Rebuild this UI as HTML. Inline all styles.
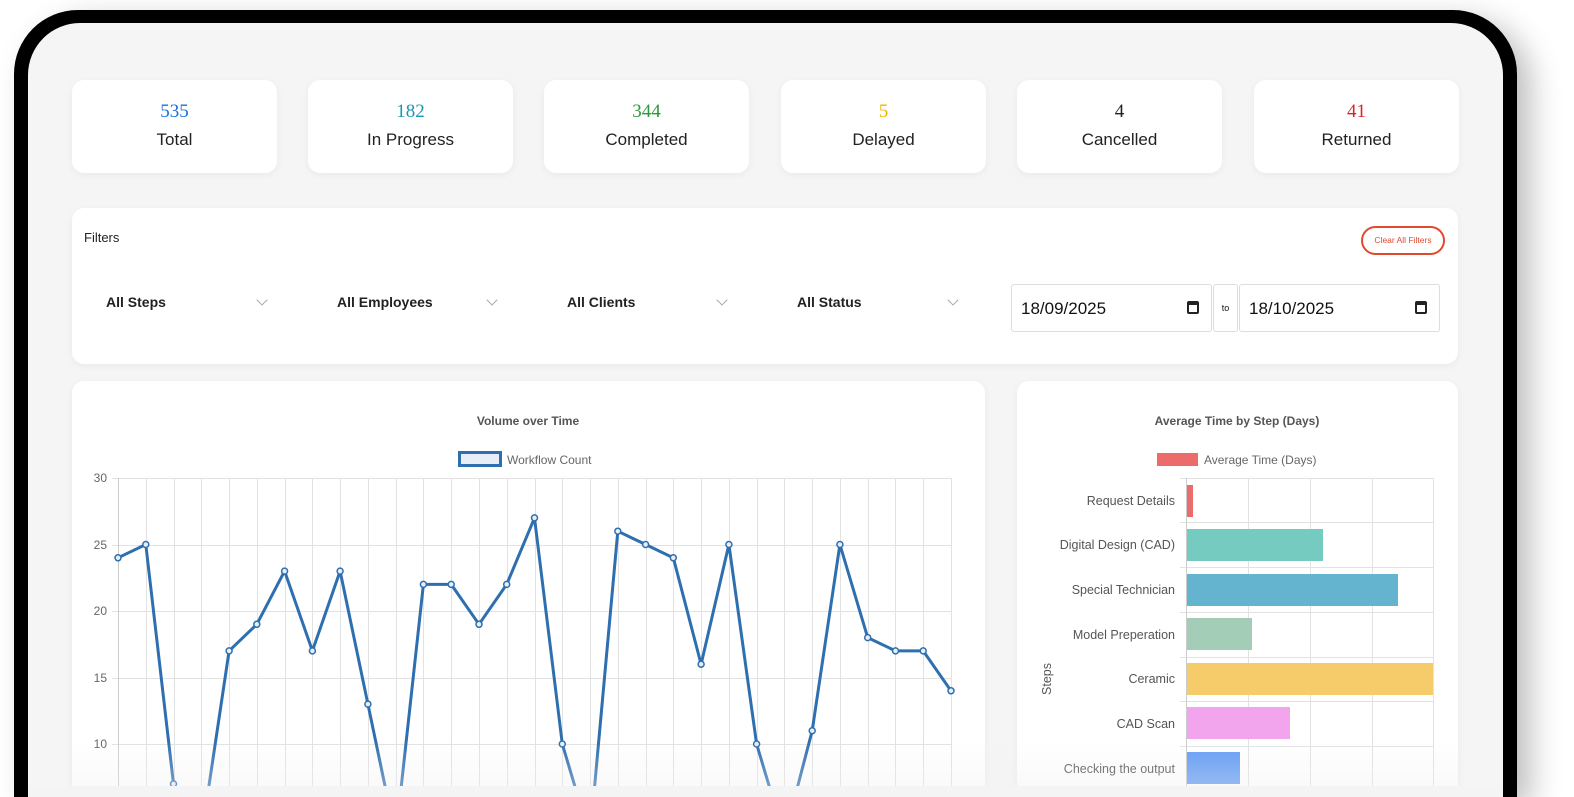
<!DOCTYPE html>
<html><head><meta charset="utf-8"><style>
*{margin:0;padding:0;box-sizing:border-box}
html,body{width:1574px;height:797px;overflow:hidden;background:#fff;font-family:"Liberation Sans",sans-serif}
#root{position:relative;width:1574px;height:797px;overflow:hidden}
.frame{position:absolute;left:14px;top:10px;width:1503px;height:787px;background:#000;border-radius:64px 64px 0 0;box-shadow:14px 10px 30px rgba(0,0,0,.25)}
.inner{position:absolute;left:28px;top:23px;width:1475px;height:774px;background:#f5f5f5;border-radius:52px 52px 0 0}
.card{position:absolute;background:#fff;border-radius:12px;box-shadow:0 2px 8px rgba(0,0,0,.05)}
.stat{width:205px;height:93px;text-align:center}
.stat .n{font-family:"Liberation Serif",serif;font-size:19px;margin-top:21px;height:22px}
.stat .l{font-size:17px;color:#222;margin-top:7px}
.sel{position:absolute;font-size:14px;font-weight:bold;color:#222}
.chev{position:absolute;width:8px;height:8px;border-right:1.5px solid #aaa;border-bottom:1.5px solid #aaa;transform:rotate(45deg)}
.date{position:absolute;top:284px;height:48px;border:1px solid #ddd;border-radius:3px;font-size:17px;color:#111;padding:14px 9px;background:#fff}
.cal{position:absolute;right:12px;top:16px;width:12px;height:13px;border:2px solid #222;border-top-width:4px;border-radius:2px}
.bottom{position:absolute;left:28px;top:786px;width:1475px;height:11px;background:#f4f4f4}
.fade{position:absolute;left:72px;top:740px;width:1386px;height:46px;background:linear-gradient(rgba(255,255,255,0),rgba(240,240,240,.35))}
</style></head><body><div id="root">
<div class="frame"></div>
<div class="inner"></div>
<div class="card stat" style="left:72px;top:80px"><div class="n" style="color:#1a6fe0">535</div><div class="l">Total</div></div>
<div class="card stat" style="left:308px;top:80px"><div class="n" style="color:#1a96b0">182</div><div class="l">In Progress</div></div>
<div class="card stat" style="left:544px;top:80px"><div class="n" style="color:#2a9a3a">344</div><div class="l">Completed</div></div>
<div class="card stat" style="left:781px;top:80px"><div class="n" style="color:#f0b400">5</div><div class="l">Delayed</div></div>
<div class="card stat" style="left:1017px;top:80px"><div class="n" style="color:#222">4</div><div class="l">Cancelled</div></div>
<div class="card stat" style="left:1254px;top:80px"><div class="n" style="color:#d9232e">41</div><div class="l">Returned</div></div>

<div class="card" style="left:72px;top:208px;width:1386px;height:156px"></div>
<div style="position:absolute;left:84px;top:230px;font-size:13px;color:#222">Filters</div>
<div style="position:absolute;left:1361px;top:226px;width:84px;height:29px;border:2px solid #e04a2f;border-radius:15px;color:#e04a2f;font-size:8.5px;text-align:center;line-height:25px">Clear All Filters</div>
<div class="sel" style="left:106px;top:294px">All Steps</div><div class="chev" style="left:258px;top:296px"></div>
<div class="sel" style="left:337px;top:294px">All Employees</div><div class="chev" style="left:488px;top:296px"></div>
<div class="sel" style="left:567px;top:294px">All Clients</div><div class="chev" style="left:718px;top:296px"></div>
<div class="sel" style="left:797px;top:294px">All Status</div><div class="chev" style="left:949px;top:296px"></div>
<div class="date" style="left:1011px;width:201px">18/09/2025<div class="cal"></div></div>
<div class="date" style="left:1213px;width:25px;font-size:9px;padding:18px 0;text-align:center">to</div>
<div class="date" style="left:1239px;width:201px">18/10/2025<div class="cal"></div></div>

<div class="card" style="left:72px;top:381px;width:913px;height:405px;border-radius:12px 12px 0 0"></div>
<div class="card" style="left:1017px;top:381px;width:441px;height:405px;border-radius:12px 12px 0 0"></div>

<svg width="1574" height="786" style="position:absolute;left:0;top:0" font-family="Liberation Sans, sans-serif">
<g fill="#555" font-size="12" font-weight="bold" text-anchor="middle">
<text x="528" y="425">Volume over Time</text>
<text x="1237" y="425">Average Time by Step (Days)</text></g>
<rect x="459.5" y="452.5" width="41" height="13" fill="#e8eef6" stroke="#2e6fb0" stroke-width="3"/>
<text x="507" y="464" font-size="12" fill="#666">Workflow Count</text>
<rect x="1157" y="453" width="41" height="13" fill="#ec6b6b"/>
<text x="1204" y="464" font-size="12" fill="#666">Average Time (Days)</text>
<g stroke="#e2e2e2" stroke-width="1">
<line x1="112" y1="478.5" x2="951" y2="478.5"/><line x1="112" y1="545.5" x2="951" y2="545.5"/><line x1="112" y1="611.5" x2="951" y2="611.5"/><line x1="112" y1="678.5" x2="951" y2="678.5"/><line x1="112" y1="744.5" x2="951" y2="744.5"/>
</g>
<g stroke="#e2e2e2" id="vg"></g>
<g fill="#666" font-size="12" text-anchor="end">
<text x="107" y="482">30</text><text x="107" y="549">25</text><text x="107" y="615">20</text><text x="107" y="682">15</text><text x="107" y="748">10</text></g>
<g id="lc"></g>
<g stroke="#e2e2e2"><line x1="1248.5" y1="478" x2="1248.5" y2="786"/><line x1="1310.5" y1="478" x2="1310.5" y2="786"/><line x1="1372.5" y1="478" x2="1372.5" y2="786"/><line x1="1433.5" y1="478" x2="1433.5" y2="786"/>
<line x1="1180" y1="478.5" x2="1433" y2="478.5"/><line x1="1180" y1="522.5" x2="1433" y2="522.5"/><line x1="1180" y1="567.5" x2="1433" y2="567.5"/><line x1="1180" y1="612.5" x2="1433" y2="612.5"/><line x1="1180" y1="657.5" x2="1433" y2="657.5"/><line x1="1180" y1="701.5" x2="1433" y2="701.5"/><line x1="1180" y1="746.5" x2="1433" y2="746.5"/></g>
<line x1="1186.5" y1="478" x2="1186.5" y2="786" stroke="#ccc"/>
<rect x="1187" y="485" width="6" height="32" fill="#ec6b6b"/>
<rect x="1187" y="529" width="136" height="32" fill="#76cbc0"/>
<rect x="1187" y="574" width="211" height="32" fill="#64b4cf"/>
<rect x="1187" y="618" width="65" height="32" fill="#a3cdb6"/>
<rect x="1187" y="663" width="246" height="32" fill="#f6cb6a"/>
<rect x="1187" y="707" width="103" height="32" fill="#f2a4ec"/>
<rect x="1187" y="752" width="53" height="32" fill="#649cf4"/>
<g fill="#555" font-size="12.5" text-anchor="end">
<text x="1175" y="505">Request Details</text><text x="1175" y="549">Digital Design (CAD)</text><text x="1175" y="594">Special Technician</text><text x="1175" y="639">Model Preperation</text><text x="1175" y="683">Ceramic</text><text x="1175" y="728">CAD Scan</text><text x="1175" y="773">Checking the output</text></g>
<text transform="translate(1051,679) rotate(-90)" font-size="12.5" fill="#555" text-anchor="middle">Steps</text>
</svg>
<div class="fade"></div>
<div class="bottom"></div>
</div>
<script>
var pts=[24,25,7,3,17,19,23,17,23,13,3,22,22,19,22,27,10,3,26,25,24,16,25,10,3,11,25,18,17,17,14];
var ns="http://www.w3.org/2000/svg",vg=document.getElementById('vg'),lc=document.getElementById('lc'),d="",c="";
for(var i=0;i<pts.length;i++){var x=118+i*833/30,y=478+(30-pts[i])*13.3;
var l=document.createElementNS(ns,'line');l.setAttribute('x1',Math.round(x)+.5);l.setAttribute('x2',Math.round(x)+.5);l.setAttribute('y1',478);l.setAttribute('y2',786);if(i==0)l.setAttribute('stroke','#ccc');vg.appendChild(l);
d+=(i?'L':'M')+x.toFixed(1)+' '+y.toFixed(1);
if(pts[i]>5)c+='<circle cx="'+x.toFixed(1)+'" cy="'+y.toFixed(1)+'" r="3" fill="#e8eef6" stroke="#2e6fb0" stroke-width="1.5"/>';}
lc.innerHTML='<path d="'+d+'" fill="none" stroke="#2e6fb0" stroke-width="3" stroke-linejoin="round"/>'+c;
</script>
</body></html>
